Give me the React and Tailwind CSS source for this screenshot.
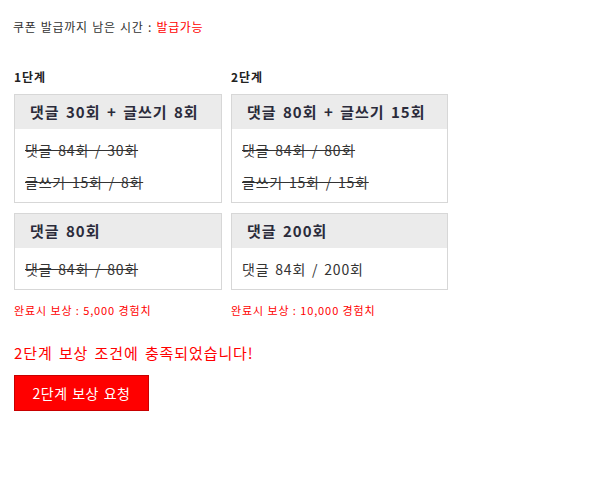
export default function App() {
  const stages = [
    {
      label: "1단계",
      width: "w-[208px]",
      boxes: [
        {
          title: "댓글 30회 + 글쓰기 8회",
          lines: [
            { text: "댓글 84회 / 30회", done: true },
            { text: "글쓰기 15회 / 8회", done: true },
          ],
        },
        {
          title: "댓글 80회",
          lines: [{ text: "댓글 84회 / 80회", done: true }],
        },
      ],
      reward: "완료시 보상 : 5,000 경험치",
    },
    {
      label: "2단계",
      width: "w-[217px]",
      boxes: [
        {
          title: "댓글 80회 + 글쓰기 15회",
          lines: [
            { text: "댓글 84회 / 80회", done: true },
            { text: "글쓰기 15회 / 15회", done: true },
          ],
        },
        {
          title: "댓글 200회",
          lines: [{ text: "댓글 84회 / 200회", done: false }],
        },
      ],
      reward: "완료시 보상 : 10,000 경험치",
    },
  ];

  return (
    <div
      className="min-h-[493px] bg-white px-[14px] pt-[18px] text-[#333]"
      style={{ fontFamily: '"Noto Sans CJK KR", "Noto Sans", sans-serif' }}
    >
      <p className="-ml-px text-[12px] leading-[18px] tracking-[0.7px] [word-spacing:1px]">
        쿠폰 발급까지 남은 시간 : <span className="text-[#ff0000]">발급가능</span>
      </p>

      <div className="mt-[32px] flex gap-[9px]">
        {stages.map((stage) => (
          <div key={stage.label} className={stage.width}>
            <p className="text-[12px] font-bold leading-[18px] tracking-[1px] text-[#222]">{stage.label}</p>
            <div className="mt-[8px] flex flex-col gap-[10px]">
              {stage.boxes.map((box) => (
                <div key={box.title} className="border border-[#d7d7d7]">
                  <div className="flex h-[34px] items-center bg-[#ebebeb] pl-[15px] text-[15px] font-bold tracking-[1px] text-[#2b2b3b] [word-spacing:2px]">
                    {box.title}
                  </div>
                  <div className="pb-[4px] pl-[10px] pt-[5px] text-[14px] leading-[32px] tracking-[0.8px] [word-spacing:2px]">
                    {box.lines.map((line) => (
                      <p key={line.text} className={line.done ? "line-through" : ""}>
                        {line.text}
                      </p>
                    ))}
                  </div>
                </div>
              ))}
            </div>
            <p className="mt-[11px] text-[11px] leading-[18px] tracking-[0.9px] text-[#ff0000]">{stage.reward}</p>
          </div>
        ))}
      </div>

      <p className="mt-[24px] text-[15px] leading-[20px] tracking-[0.9px] text-[#ff0000] [word-spacing:2px]">
        2단계 보상 조건에 충족되었습니다!
      </p>
      <button className="mt-[12px] h-[36px] w-[135px] border border-[#c80000] bg-[#ff0000] text-[14px] tracking-[0.5px] text-white [word-spacing:1px]">
        2단계 보상 요청
      </button>
    </div>
  );
}
